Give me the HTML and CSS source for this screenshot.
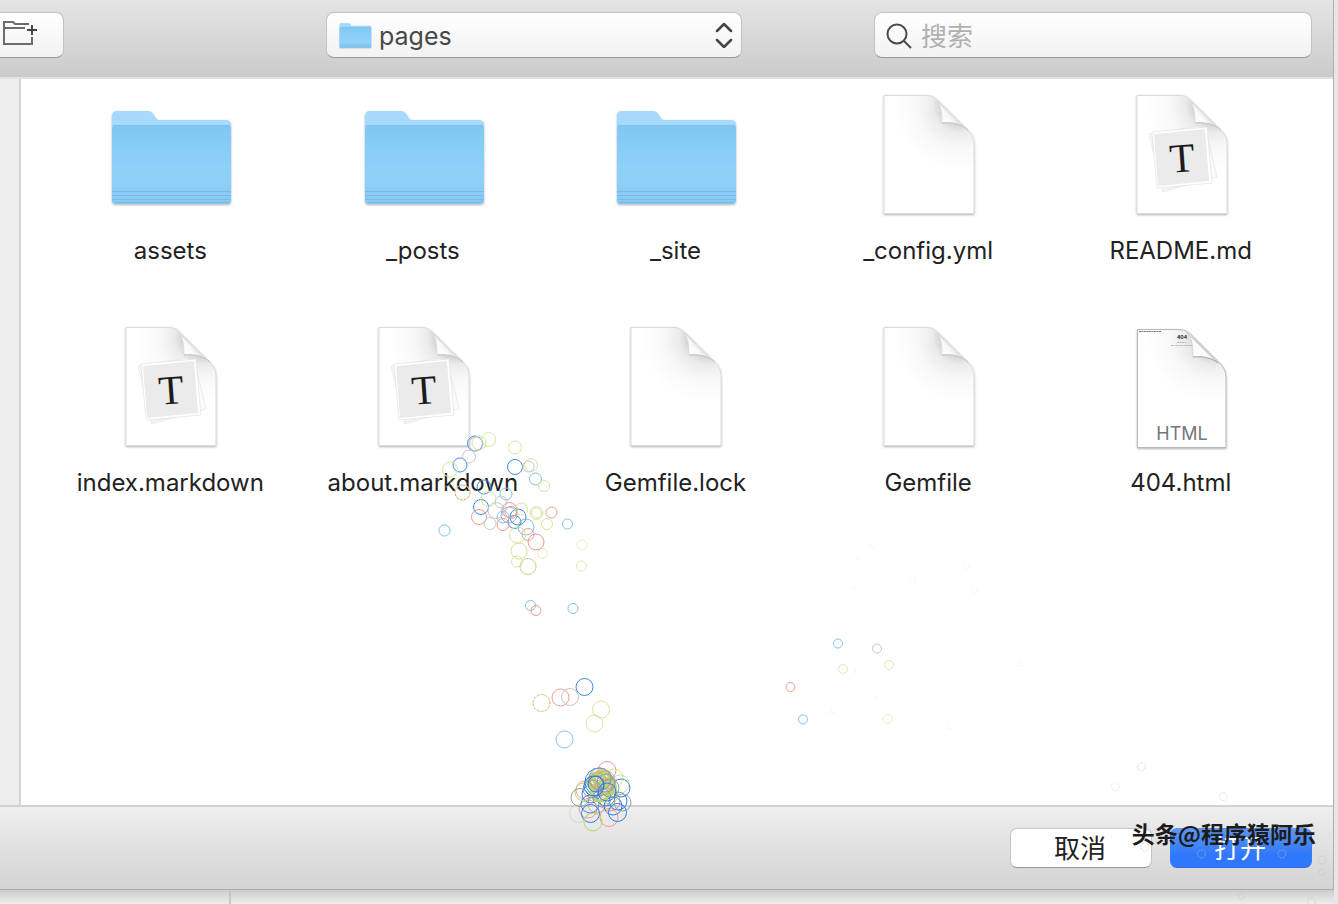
FILE: index.html
```html
<!DOCTYPE html>
<html lang="zh-CN">
<head>
<meta charset="utf-8">
<title>pages</title>
<link rel="stylesheet" href="styles.css">
</head>
<body>
<svg class="defs" aria-hidden="true">
  <defs>
    <linearGradient id="folder-front" x1="0" y1="0" x2="0" y2="1">
      <stop offset="0" stop-color="#7fc6f2"/>
      <stop offset=".3" stop-color="#87cef8"/>
      <stop offset=".7" stop-color="#90d0f8"/>
      <stop offset="1" stop-color="#84c8f3"/>
    </linearGradient>
    <radialGradient id="sheet-shade" gradientUnits="userSpaceOnUse" cx="96" cy="14" r="66">
      <stop offset=".28" stop-color="#d2d2d2"/>
      <stop offset=".42" stop-color="#ebebeb"/>
      <stop offset=".65" stop-color="#f8f8f8"/>
      <stop offset="1" stop-color="#fff"/>
    </radialGradient>
    <linearGradient id="curl" gradientUnits="userSpaceOnUse" x1="78" y1="33" x2="90" y2="23">
      <stop offset="0" stop-color="#fff"/>
      <stop offset=".6" stop-color="#fafafa"/>
      <stop offset="1" stop-color="#dcdcdc"/>
    </linearGradient>
    <filter id="soft" x="-10%" y="-10%" width="120%" height="125%">
      <feDropShadow dx="0" dy="1" stdDeviation="1" flood-color="#000" flood-opacity=".3"/>
    </filter>
  </defs>
  <symbol id="folder" viewBox="0 0 128 128">
    <g filter="url(#soft)">
      <path d="M6 25q0-5 5-5h30c4 0 5 1 7 4 2 4 3 5 7 5h65q5 0 5 5v75q0 4-4 4H10q-4 0-4-4z" fill="#a6d9fc"/>
      <path d="M6 38q0-4 4-4h111q4 0 4 4v71q0 4-4 4H10q-4 0-4-4z" fill="url(#folder-front)"/>
    </g>
    <path d="M7 34.500h117" stroke="#7ec3ef"/>
    <path d="M6 100.500h119M6 104.500h119M6 108.500h119M8 111.500h115" stroke="#79b9e4"/>
  </symbol>
  <symbol id="sheet" viewBox="0 0 128 128">
    <path filter="url(#soft)" d="M20 4.500h43c7 0 10 4 14 8l24 24c7 6 9 10 9 18v68H20z" fill="url(#sheet-shade)" stroke="#dadada"/>
    <path d="M72 9c6 6 6 15 6 23 10-1 19 1 26 7z" fill="url(#curl)" stroke="#d8d8d8" stroke-width=".7"/>
    <path d="M78 32c10-1 19 1 26 7" fill="none" stroke="#c4c4c4"/>
  </symbol>
  <symbol id="markdown" viewBox="0 0 128 128">
    <use href="#sheet" width="128" height="128"/>
    <g stroke="#e2e2e2" stroke-width=".7" fill="#fbfbfb">
      <path d="M32 43l50-8 15 51-51 15z"/>
      <path d="M34 42l54-5 12 49-55 13z"/>
      <path d="M35 41l55-5 5 56-55 5z" fill="#fff"/>
    </g>
    <path d="M37 43l51-5 4 52-51 5z" fill="#ebebeb"/>
  </symbol>
  <symbol id="webpage" viewBox="0 0 128 128">
    <path filter="url(#soft)" d="M20.500 6.500H62c6 0 10 3 14 7l23 23c7 6 10 11 10 18v70H20.500z" fill="url(#sheet-shade)" stroke="#b8b8b8"/>
    <path d="M70 10c6 6 6 15 6 24 10-1 19 1 25 6z" fill="url(#curl)" stroke="#ccc" stroke-width=".7"/>
    <path d="M76 34c10-1 19 1 25 6" fill="none" stroke="#aaa"/>
    <path d="M22 8.500h22" stroke="#777" stroke-dasharray="2 .5"/>
    <path d="M60 19.500h10M54 22.500h21" stroke="#aaa" stroke-dasharray="2 .5" stroke-width=".8"/>
  </symbol>
</svg>

<div class="dialog">
  <header class="toolbar">
    <button class="control new-folder" type="button" aria-label="New folder">
      <svg width="40" height="28" viewBox="0 0 40 28" fill="none" stroke="#6c6c70" stroke-width="2">
        <path d="M29 5H15l-2-2H4v22h28v-7M4 9h21"/>
        <path d="M32 6v10M27 11h10" stroke="#444"/>
      </svg>
    </button>
    <div class="location">
      <svg class="location-folder" width="34" height="34" viewBox="0 0 128 128" aria-hidden="true"><use href="#folder"/></svg>
      <select class="control" aria-label="Location"><option>pages</option></select>
      <svg class="chevrons" width="18" height="26" viewBox="0 0 18 26" fill="none" stroke="#454545" stroke-width="2.500" stroke-linecap="round" stroke-linejoin="round" aria-hidden="true"><path d="M2 9l7-7 7 7M2 18l7 7 7-7"/></svg>
    </div>
    <div class="search">
      <svg width="28" height="28" viewBox="0 0 28 28" fill="none" stroke="#4a4a4a" stroke-width="2" aria-hidden="true"><circle cx="11" cy="13" r="9.500"/><path d="M18 20l7 7"/></svg>
      <input class="control" type="search" placeholder="搜索" aria-label="搜索">
    </div>
  </header>

  <div class="content">
    <aside class="sidebar"></aside>
    <main class="files">
      <figure><svg class="icon" viewBox="0 0 128 128"><use href="#folder"/></svg><figcaption>assets</figcaption></figure>
      <figure><svg class="icon" viewBox="0 0 128 128"><use href="#folder"/></svg><figcaption>_posts</figcaption></figure>
      <figure><svg class="icon" viewBox="0 0 128 128"><use href="#folder"/></svg><figcaption>_site</figcaption></figure>
      <figure><svg class="icon" viewBox="0 0 128 128"><use href="#sheet"/></svg><figcaption>_config.yml</figcaption></figure>
      <figure><svg class="icon" viewBox="0 0 128 128"><use href="#markdown"/><text class="letter" x="65" y="81" transform="rotate(-4 65 67)">T</text></svg><figcaption>README.md</figcaption></figure>
      <figure><svg class="icon" viewBox="0 0 128 128"><use href="#markdown"/><text class="letter" x="65" y="81" transform="rotate(-4 65 67)">T</text></svg><figcaption>index.markdown</figcaption></figure>
      <figure><svg class="icon" viewBox="0 0 128 128"><use href="#markdown"/><text class="letter" x="65" y="81" transform="rotate(-4 65 67)">T</text></svg><figcaption>about.markdown</figcaption></figure>
      <figure><svg class="icon" viewBox="0 0 128 128"><use href="#sheet"/></svg><figcaption>Gemfile.lock</figcaption></figure>
      <figure><svg class="icon" viewBox="0 0 128 128"><use href="#sheet"/></svg><figcaption>Gemfile</figcaption></figure>
      <figure><svg class="icon" viewBox="0 0 128 128"><use href="#webpage"/><text class="thumb-title" x="65" y="16">404</text><text class="thumb-type" x="65" y="117">HTML</text></svg><figcaption>404.html</figcaption></figure>
    </main>
  </div>

  <footer class="actions">
    <button class="action" type="button">取消</button>
    <button class="action primary" type="button">打开</button>
    <span class="watermark">头条@程序猿阿乐</span>
  </footer>
</div>
<div class="backdrop"></div>

<svg class="particles" aria-hidden="true" fill="none">
  <g class="blue">
    <circle cx="475" cy="443.500" r="7.500"/><circle cx="460" cy="465" r="7"/><circle cx="515" cy="467" r="7.500"/>
    <circle cx="484" cy="487" r="7"/><circle cx="481" cy="507" r="7.500"/><circle cx="518" cy="517" r="8"/>
    <circle cx="514.500" cy="522" r="6.500"/><circle cx="584.500" cy="687" r="8.500"/>
  </g>
  <g class="sky">
    <circle cx="535.500" cy="479" r="6"/><circle cx="506" cy="494" r="6"/><circle cx="509" cy="515" r="8"/>
    <circle cx="503" cy="517" r="6"/><circle cx="567.500" cy="524" r="5"/><circle cx="526" cy="527" r="8"/>
    <circle cx="444.500" cy="530.500" r="5.500"/><circle cx="530.500" cy="605.500" r="5"/><circle cx="573" cy="608.500" r="5"/>
    <circle cx="564.500" cy="739.500" r="8.500"/><circle cx="838" cy="643.500" r="4.500"/><circle cx="803" cy="719.500" r="4.500"/>
  </g>
  <g class="green">
    <circle cx="479" cy="443" r="7"/><circle cx="488.500" cy="439.500" r="7"/><circle cx="515" cy="447.500" r="6.500"/>
    <circle cx="450" cy="469.500" r="7.500"/><circle cx="445" cy="481" r="6" opacity=".4"/><circle cx="531" cy="465" r="6.500"/>
    <circle cx="544" cy="486" r="5.500"/><circle cx="488.500" cy="499" r="7.500"/><circle cx="521.500" cy="509" r="6"/>
    <circle cx="536.500" cy="513" r="6.500"/><circle cx="536.500" cy="513" r="5"/><circle cx="547" cy="524" r="5.500"/>
    <circle cx="462.500" cy="492.500" r="7.500"/><circle cx="517.500" cy="535" r="8"/><circle cx="519" cy="551" r="8"/>
    <circle cx="542.500" cy="553.500" r="5" opacity=".6"/><circle cx="517" cy="561.500" r="5.500"/><circle cx="528" cy="566.500" r="8"/>
    <circle cx="582" cy="545" r="5" opacity=".6"/><circle cx="581.500" cy="566" r="5" opacity=".8"/><circle cx="541.500" cy="703" r="8.500"/>
    <circle cx="601" cy="709.500" r="8.500"/><circle cx="594.500" cy="723.500" r="8.500"/><circle cx="843" cy="669" r="4.500" opacity=".8"/>
    <circle cx="889" cy="665" r="4.500" opacity=".8"/><circle cx="887.500" cy="719" r="4.500" opacity=".6"/>
  </g>
  <g class="red">
    <circle cx="479" cy="517" r="7.500"/><circle cx="503" cy="524.500" r="6"/><circle cx="509.500" cy="510" r="7.500"/>
    <circle cx="511" cy="512.500" r="6"/><circle cx="551.500" cy="512.500" r="5.500"/><circle cx="528" cy="534.500" r="6"/>
    <circle cx="536" cy="542" r="8"/><circle cx="536" cy="610.500" r="5"/><circle cx="560.500" cy="697.500" r="8.500"/>
    <circle cx="790.500" cy="687" r="4.500"/>
    <circle cx="462.500" cy="492.500" r="7.500" stroke-dasharray="2 2"/><circle cx="528" cy="566.500" r="8" stroke-dasharray="1 2"/>
    <circle cx="541.500" cy="703" r="8.500" stroke-dasharray="1 3"/>
  </g>
  <g class="gray">
    <circle cx="476" cy="444" r="7"/><circle cx="469" cy="456.500" r="6.500"/><circle cx="528.500" cy="466.500" r="5.500"/>
    <circle cx="501" cy="502" r="6"/><circle cx="496" cy="510.500" r="8"/><circle cx="490" cy="523.500" r="6"/>
    <circle cx="570" cy="697" r="8.500"/><circle cx="877" cy="648.500" r="4.500"/>
  </g>
  <g class="burst">
    <g class="red"><circle cx="607" cy="770.500" r="9"/><circle cx="588" cy="809" r="9"/><circle cx="609" cy="817.500" r="9"/><circle cx="610" cy="801" r="10"/><circle cx="585" cy="790" r="9"/><circle cx="597" cy="804" r="9"/></g>
    <g class="blue"><circle cx="617.500" cy="812.500" r="9"/><circle cx="590.500" cy="813.500" r="9"/><circle cx="621" cy="788" r="9"/><circle cx="618" cy="801" r="9"/><circle cx="590" cy="804" r="9"/><circle cx="606" cy="797" r="9"/><circle cx="591" cy="794" r="9"/><circle cx="613" cy="806" r="9"/><circle cx="599" cy="782" r="14"/></g>
    <g class="green"><circle cx="578.500" cy="813.500" r="9" opacity=".5"/><circle cx="593" cy="822" r="9"/><circle cx="620" cy="784" r="9" opacity=".7"/><circle cx="614" cy="778" r="9" opacity=".7"/><circle cx="584" cy="792" r="9"/><circle cx="597" cy="782" r="8" stroke-width="5"/><circle cx="607" cy="787" r="8" stroke-width="4"/><circle cx="600" cy="792" r="9" stroke-width="3"/><circle cx="602" cy="779" r="8" stroke-width="4"/><circle cx="609" cy="795" r="9"/></g>
    <g class="red"><circle cx="603" cy="787" r="8"/><circle cx="598" cy="780" r="8"/><circle cx="606" cy="780" r="9"/></g>
    <g class="gray"><circle cx="580" cy="797.500" r="9"/><circle cx="622.500" cy="802.500" r="8.500"/><circle cx="600" cy="779" r="11"/><circle cx="610" cy="788" r="9"/><circle cx="602" cy="798" r="9"/><circle cx="592" cy="789" r="9"/><circle cx="606" cy="783" r="9"/></g>
    <g class="blue"><circle cx="594" cy="786" r="10"/><circle cx="596" cy="784" r="8"/><circle cx="607" cy="792" r="9"/></g>
  </g>
  <g class="faint">
    <circle cx="1141.500" cy="767" r="4"/><circle cx="1115.500" cy="786.500" r="4" opacity=".6"/><circle cx="1223.500" cy="796.500" r="4" opacity=".8"/>
    <circle cx="1145" cy="847" r="4"/><circle cx="1201.500" cy="854" r="4"/><circle cx="1282" cy="854" r="4"/>
    <circle cx="1322" cy="860" r="4"/><circle cx="1322" cy="872" r="3"/><circle cx="1241.500" cy="896" r="3"/><circle cx="1311.500" cy="902" r="4"/>
  </g>
  <g class="trace">
    <circle cx="871" cy="547" r="2"/><circle cx="966" cy="566" r="3"/><circle cx="912" cy="582" r="3"/>
    <circle cx="854" cy="588" r="2"/><circle cx="974" cy="590" r="3"/><circle cx="857" cy="558" r="1"/><circle cx="855" cy="672" r="1"/>
    <circle cx="875" cy="697" r="1"/><circle cx="831" cy="712" r="2"/><circle cx="949" cy="728" r="2"/><circle cx="1019" cy="665" r="2"/>
  </g>
</svg>
</body>
</html>
```
FILE: styles.css
```css
* { box-sizing: border-box; }

body {
  position: relative;
  display: flex;
  flex-direction: column;
  min-height: 100vh;
  margin: 0;
  overflow-x: hidden;
  background: #e6e6e6;
  color: #222;
  font-family: Inter, "Noto Sans CJK SC", sans-serif;
  font-size: 24px;
}

.defs {
  position: absolute;
  width: 0;
  height: 0;
}

.dialog {
  display: flex;
  flex: 1;
  flex-direction: column;
  margin-right: 4px;
  border-right: 1px solid #b0b0b0;
  border-bottom: 1px solid #acacac;
}

.toolbar {
  display: flex;
  padding: 12px 21px 19px 0;
  border-bottom: 2px solid #e2e2e2;
  background: linear-gradient(#e4e4e4, #cbcbcb);
}

.control {
  width: 100%;
  height: 46px;
  border: 1px solid #c2c2c2;
  border-bottom-color: #999;
  border-radius: 8px;
  background: linear-gradient(#fff, #f2f2f2);
  color: #484848;
  font: inherit;
}

.new-folder {
  width: 64px;
  padding: 6px 0 0;
  border-left: 0;
  border-radius: 0 8px 8px 0;
  text-align: left;
}

.new-folder svg { display: block; margin-bottom: 10px; }

.location, .search {
  display: grid;
  align-items: center;
}

.location {
  flex: 416;
  margin-left: 262px;
}

.search {
  flex: 438;
  margin-left: 132px;
}

.location > *, .search > * { grid-area: 1 / 1; }

.location svg, .search svg {
  z-index: 1;
  pointer-events: none;
}

.location-folder { margin-left: 12px; }

.chevrons {
  justify-self: end;
  margin-right: 9px;
}

.location select {
  padding: 2px 40px 0 52px;
  appearance: none;
  font-size: 25px;
}

.search svg { margin-left: 12px; }

.search input {
  padding: 2px 16px 0 46px;
  appearance: none;
  font-size: 26px;
}

.search input::placeholder { color: #b0b0b0; }

.content {
  display: flex;
  flex: 1;
  background: #fff;
}

.sidebar {
  width: 21px;
  border-right: 2px solid #d4d4d4;
  background: #eee;
}

.files {
  display: grid;
  flex: 1;
  grid-template-columns: repeat(5, 1fr);
  align-content: start;
  gap: 56px 0;
  padding: 12px 26px 12px 23px;
}

figure {
  display: flex;
  flex-direction: column;
  align-items: center;
  gap: 16px;
  margin: 0;
}

.icon {
  width: 128px;
  height: 128px;
}

figcaption { line-height: 32px; }

.letter {
  fill: #1c1c1c;
  font: 41px "Liberation Serif", serif;
  text-anchor: middle;
}

.thumb-title {
  fill: #222;
  font: bold 5px Inter, sans-serif;
  text-anchor: middle;
}

.thumb-type {
  fill: #777;
  font: 18px Inter, sans-serif;
  text-anchor: middle;
}

.actions {
  position: relative;
  display: flex;
  justify-content: flex-end;
  gap: 18px;
  padding: 21px 21px 21px 0;
  border-top: 2px solid #d2d2d2;
  background: linear-gradient(#eee, #d3d3d3);
}

.action {
  width: 142px;
  height: 40px;
  padding: 0 2px 2px 0;
  border: 1px solid #c4c4c4;
  border-bottom-color: #999;
  border-radius: 7px;
  background: #fff;
  color: #222;
  font: 26px/36px "Noto Sans CJK SC", sans-serif;
}

.primary {
  border-color: #5b93ee #3b7df5 #2f6ee8;
  background: linear-gradient(#5e97f0, #2f77fb 70%);
  color: #fff;
}

.watermark {
  position: absolute;
  top: 10px;
  right: 17px;
  color: #1c1c1c;
  font: bold 23px/32px "Noto Sans CJK SC", sans-serif;
}

.backdrop {
  height: 14px;
  margin-right: 4px;
  background:
    linear-gradient(90deg, transparent 229px, #c6c6c6 229px, #c6c6c6 231px, transparent 231px),
    linear-gradient(#cdcdcd, #ededed);
}

.particles {
  position: absolute;
  inset: 0;
  width: 100%;
  height: 100%;
  pointer-events: none;
}

.blue { stroke: #3d8be6; }
.sky { stroke: #7fc0f0; }
.green { stroke: #d5e69a; }
.red { stroke: #ec9c8e; }
.gray { stroke: #c6c6ca; }
.burst .green { stroke: #b5d970; }
.burst .gray { stroke: #8f9aa8; }
.burst .blue { stroke: #2f7cf0; }
.faint { stroke: #b4c4c8; stroke-dasharray: 2 1; opacity: .6; }
.trace { stroke: #e8e8e8; stroke-dasharray: 1 3; }
```
